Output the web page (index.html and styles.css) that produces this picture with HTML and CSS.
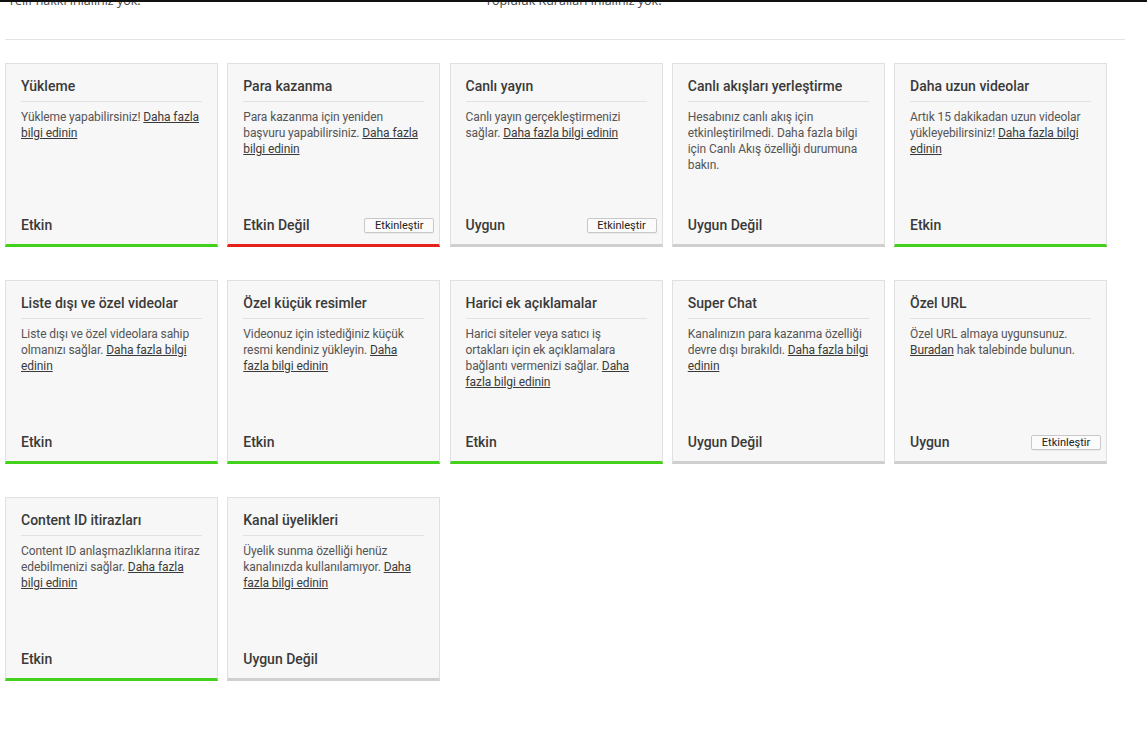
FILE: index.html
```html
<!DOCTYPE html>
<html lang="tr">
<head>
  <meta charset="UTF-8" />
  <meta name="viewport" content="width=device-width, initial-scale=1.0"/>
  <title>Kanal durumu ve özellikler</title>
  <link rel="stylesheet" href="styles.css">
</head>
<body>
  <div class="strikes">
    <div class="strikes-row">
      <div class="strike-col">Telif hakkı ihlaliniz yok.</div>
      <div class="strike-col">Topluluk Kuralları ihlaliniz yok.</div>
    </div>
  </div>
  <div class="rule"></div>

  <div class="features">
    <div class="card on">
      <h3>Yükleme</h3>
      <p>Yükleme yapabilirsiniz! <a href="#">Daha fazla bilgi edinin</a></p>
      <div class="status"><span>Etkin</span></div>
    </div>

    <div class="card off">
      <h3>Para kazanma</h3>
      <p>Para kazanma için yeniden başvuru yapabilirsiniz. <a href="#">Daha fazla bilgi edinin</a></p>
      <div class="status"><span>Etkin Değil</span><button type="button">Etkinleştir</button></div>
    </div>

    <div class="card">
      <h3>Canlı yayın</h3>
      <p>Canlı yayın gerçekleştirmenizi sağlar. <a href="#">Daha fazla bilgi edinin</a></p>
      <div class="status"><span>Uygun</span><button type="button">Etkinleştir</button></div>
    </div>

    <div class="card">
      <h3>Canlı akışları yerleştirme</h3>
      <p>Hesabınız canlı akış için etkinleştirilmedi. Daha fazla bilgi için Canlı Akış özelliği durumuna bakın.</p>
      <div class="status"><span>Uygun Değil</span></div>
    </div>

    <div class="card on">
      <h3>Daha uzun videolar</h3>
      <p>Artık 15 dakikadan uzun videolar yükleyebilirsiniz! <a href="#">Daha fazla bilgi edinin</a></p>
      <div class="status"><span>Etkin</span></div>
    </div>

    <div class="card on">
      <h3>Liste dışı ve özel videolar</h3>
      <p>Liste dışı ve özel videolara sahip olmanızı sağlar. <a href="#">Daha fazla bilgi edinin</a></p>
      <div class="status"><span>Etkin</span></div>
    </div>

    <div class="card on">
      <h3>Özel küçük resimler</h3>
      <p>Videonuz için istediğiniz küçük resmi kendiniz yükleyin. <a href="#">Daha fazla bilgi edinin</a></p>
      <div class="status"><span>Etkin</span></div>
    </div>

    <div class="card on">
      <h3>Harici ek açıklamalar</h3>
      <p>Harici siteler veya satıcı iş ortakları için ek açıklamalara bağlantı vermenizi sağlar. <a href="#">Daha fazla bilgi edinin</a></p>
      <div class="status"><span>Etkin</span></div>
    </div>

    <div class="card">
      <h3>Super Chat</h3>
      <p>Kanalınızın para kazanma özelliği devre dışı bırakıldı. <a href="#">Daha fazla bilgi edinin</a></p>
      <div class="status"><span>Uygun Değil</span></div>
    </div>

    <div class="card">
      <h3>Özel URL</h3>
      <p>Özel URL almaya uygunsunuz. <a href="#">Buradan</a> hak talebinde bulunun.</p>
      <div class="status"><span>Uygun</span><button type="button">Etkinleştir</button></div>
    </div>

    <div class="card on">
      <h3>Content ID itirazları</h3>
      <p>Content ID anlaşmazlıklarına itiraz edebilmenizi sağlar. <a href="#">Daha fazla bilgi edinin</a></p>
      <div class="status"><span>Etkin</span></div>
    </div>

    <div class="card">
      <h3>Kanal üyelikleri</h3>
      <p>Üyelik sunma özelliği henüz kanalınızda kullanılamıyor. <a href="#">Daha fazla bilgi edinin</a></p>
      <div class="status"><span>Uygun Değil</span></div>
    </div>
  </div>
</body>
</html>
```

FILE: styles.css
```css
body {
  margin: 0;
  font-family: Roboto, "Liberation Sans", sans-serif;
  background: #fff;
  color: #333;
}

/* ihlal bilgisi, sayfa kaydırılmış halde */
.strikes {
  height: 39px;
  overflow: hidden;
  border-top: 2px solid #111;
  box-sizing: border-box;
}

.strikes-row {
  display: flex;
  margin-top: -10px;
  padding-left: 8px;
  font-family: "Open Sans", sans-serif;
  font-size: 12.5px;
  line-height: 17px;
  color: #444;
}

.strike-col:first-child {
  width: 477px;
}

.rule {
  margin: 0 22px 0 5px;
  border-top: 1px solid #e3e3e3;
}

.features {
  display: grid;
  grid-template-columns: repeat(5, 213px);
  column-gap: 9.25px;
  row-gap: 33px;
  margin: 23px 0 0 5px;
}

.card {
  height: 184px;
  box-sizing: border-box;
  display: flex;
  flex-direction: column;
  padding: 12px 15px 9px;
  background: #f7f7f7;
  border: 1px solid #e0e0e0;
  border-bottom: 3px solid #cfcfcf;
}

.card.on {
  border-bottom-color: #43d11b;
}

.card.off {
  border-bottom-color: #e4211a;
}

.card h3 {
  margin: 0;
  padding-bottom: 5px;
  border-bottom: 1px solid #e2e2e2;
  font-size: 14px;
  font-weight: 500;
  line-height: 20px;
  color: #3a3a3a;
}

.card p {
  margin: 7px 0 0;
  font-size: 12px;
  line-height: 16px;
  letter-spacing: -0.09px;
  color: #555;
}

.card p a {
  color: #3a3a3a;
  text-decoration: underline;
}

.status {
  margin-top: auto;
  margin-right: -10px;
  display: flex;
  align-items: center;
  justify-content: space-between;
  font-size: 14px;
  font-weight: 500;
  line-height: 20px;
  color: #3a3a3a;
}

.status button {
  width: 70px;
  height: 15px;
  padding: 0;
  font-family: Roboto, sans-serif;
  font-size: 11px;
  line-height: 13px;
  color: #222;
  background: #fbfbfb;
  border: 1px solid #c8c8c8;
  border-radius: 2px;
  box-shadow: 0 1px 0 rgba(0,0,0,0.05);
  cursor: pointer;
}
```
